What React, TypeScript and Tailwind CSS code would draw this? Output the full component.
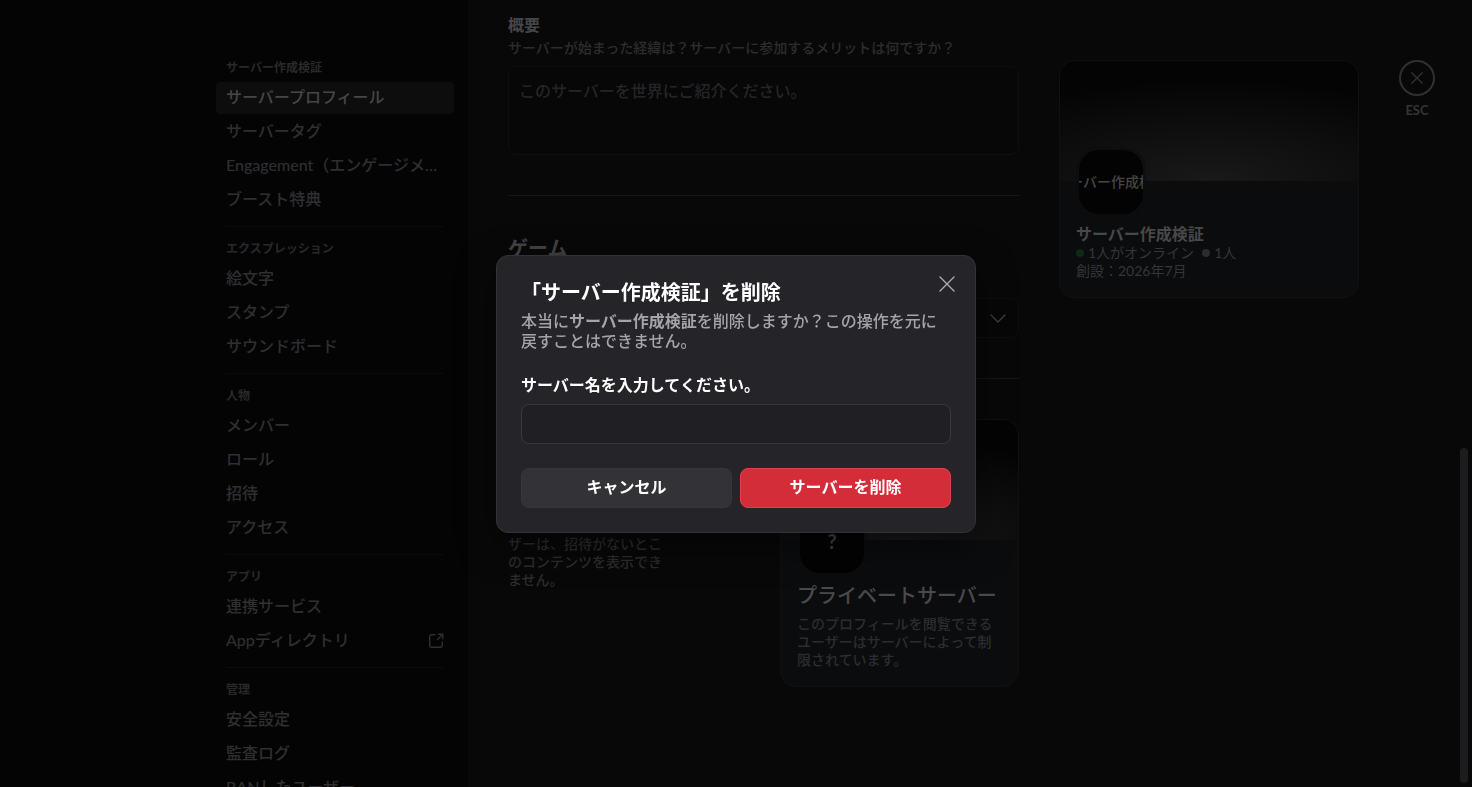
import type { ReactNode } from "react";

type NavItem = { label: string; active?: boolean; external?: boolean };
type NavSection = { title: string; items: NavItem[] };

const sections: NavSection[] = [
  {
    title: "サーバー作成検証",
    items: [
      { label: "サーバープロフィール", active: true },
      { label: "サーバータグ" },
      { label: "Engagement（エンゲージメント）" },
      { label: "ブースト特典" },
    ],
  },
  {
    title: "エクスプレッション",
    items: [{ label: "絵文字" }, { label: "スタンプ" }, { label: "サウンドボード" }],
  },
  {
    title: "人物",
    items: [{ label: "メンバー" }, { label: "ロール" }, { label: "招待" }, { label: "アクセス" }],
  },
  {
    title: "アプリ",
    items: [{ label: "連携サービス" }, { label: "Appディレクトリ", external: true }],
  },
  {
    title: "管理",
    items: [{ label: "安全設定" }, { label: "監査ログ" }, { label: "BANしたユーザー" }],
  },
];

function CloseIcon({ className }: { className: string }) {
  return (
    <svg viewBox="0 0 16 16" fill="none" stroke="currentColor" strokeLinecap="round" className={className} aria-hidden="true">
      <path d="M1 1 L15 15 M15 1 L1 15" />
    </svg>
  );
}

function ExternalIcon() {
  return (
    <svg viewBox="0 0 16 16" fill="none" stroke="currentColor" strokeWidth="1.4" strokeLinecap="round" strokeLinejoin="round" className="h-4 w-4 shrink-0" aria-hidden="true">
      <path d="M7 1.7H3.7a2 2 0 0 0-2 2v8.6a2 2 0 0 0 2 2h8.6a2 2 0 0 0 2-2V9" />
      <path d="M10.3 1.2h4.5v4.5M14.5 1.5L9.4 6.6" />
    </svg>
  );
}

function Sidebar() {
  return (
    <aside className="flex flex-[1_0_238px] justify-end bg-[#040405] pr-[14px] pt-[54px]">
      <nav className="w-[238px]" aria-label="サーバー設定">
        {sections.map((section, index) => (
          <section key={section.title}>
            {index > 0 && <hr className="mx-[10px] mb-2 mt-[10px] border-[#0b0b0c]" />}
            <h2 className="flex h-7 items-center px-[10px] text-xs font-bold text-[#29292b]">{section.title}</h2>
            <ul className="flex flex-col gap-0.5">
              {section.items.map((item) => (
                <li key={item.label}>
                  <a
                    href="#"
                    aria-current={item.active ? "page" : undefined}
                    className={
                      item.active
                        ? "flex h-8 items-start rounded bg-[#0d0d0e] px-[10px] font-medium text-[#464648]"
                        : "flex h-8 items-start rounded px-[10px] font-medium text-[#2f2f31]"
                    }
                  >
                    <span className="min-w-0 flex-1 truncate leading-[30px]">{item.label}</span>
                    {item.external && (
                      <span className="self-center">
                        <ExternalIcon />
                      </span>
                    )}
                  </a>
                </li>
              ))}
            </ul>
          </section>
        ))}
      </nav>
    </aside>
  );
}

function ProfileCard({ icon, className, children }: { icon: ReactNode; className: string; children: ReactNode }) {
  return (
    <article className={className}>
      <div className="flex h-[120px] items-end bg-[radial-gradient(100%_85%_at_50%_100%,#191919_0%,#040404_100%)] px-4">
        <div className="-mb-9 rounded-[22px] bg-[#0a0c0e]/50 p-[3px]">
          <div className="flex h-16 w-16 items-center justify-center overflow-hidden whitespace-nowrap rounded-[20px] bg-[#030303] text-[#464646]">
            {icon}
          </div>
        </div>
      </div>
      {children}
    </article>
  );
}

function ProfileForm() {
  return (
    <form className="w-[511px] pt-[15px]">
      <label htmlFor="about" className="block font-bold leading-5 text-[#464648]">
        概要
      </label>
      <p className="mt-1 text-sm font-medium leading-[18px] text-[#2d2d2f]">
        サーバーが始まった経緯は？サーバーに参加するメリットは何ですか？
      </p>
      <textarea
        id="about"
        placeholder="このサーバーを世界にご紹介ください。"
        className="mt-[9px] block h-[89px] w-full resize-none rounded-lg border border-[#0f0f10] bg-[#070708] px-[10px] py-3 font-medium leading-6 placeholder:text-[#252527]"
      />
      <hr className="my-10 border-[#161617]" />
      <label htmlFor="games" className="block text-xl font-bold leading-6 text-[#434345]">
        ゲーム
      </label>
      <div className="mt-[38px] flex items-center rounded-lg border border-[#0f0f10] bg-[#070708]">
        <select id="games" className="h-[38px] flex-1 appearance-none bg-transparent px-3 text-[#29292b]" />
        <svg viewBox="0 0 16 16" fill="none" stroke="#3e3e40" strokeWidth="1.4" strokeLinecap="round" strokeLinejoin="round" className="mr-3 h-4 w-4" aria-hidden="true">
          <path d="M1 5l7 7 7-7" />
        </svg>
      </div>
      <hr className="my-10 border-[#161617]" />
      <div className="flex justify-between">
        <div className="w-[160px]">
          <h3 className="font-semibold leading-5 text-[#464648]">プライバシー</h3>
          <p className="mt-[60px] text-sm font-medium leading-[18px] text-[#2d2d2f]">
            公開されていません。
            <br />
            参加していないユー
            <br />
            ザーは、招待がないとこのコンテンツを表示できません。
          </p>
        </div>
        <ProfileCard
          icon={<span className="text-xl font-bold leading-6">?</span>}
          className="w-[239px] overflow-hidden rounded-2xl border border-[#101113] bg-[#0a0c0e]"
        >
          <div className="px-4 pb-[17px] pt-[43px]">
            <h3 className="whitespace-nowrap text-xl font-medium leading-6 text-[#4a4a4c]">プライベートサーバー</h3>
            <p className="mt-2 text-sm font-medium leading-[18px] text-[#2d2d2f]">
              このプロフィールを閲覧できるユーザーはサーバーによって制限されています。
            </p>
          </div>
        </ProfileCard>
      </div>
    </form>
  );
}

function ServerPreview() {
  return (
    <div className="mt-[60px] w-[300px]">
      <ProfileCard
        icon={<span className="text-sm font-medium">サーバー作成検証</span>}
        className="overflow-hidden rounded-2xl border border-[#101113] bg-[#0a0c0e]"
      >
        <div className="px-4 pb-[17px] pt-[43px] text-sm leading-[18px] text-[#363638]">
          <h3 className="text-base font-bold leading-5 text-[#484848]">サーバー作成検証</h3>
          <p className="flex items-center gap-2">
            <span className="flex items-center gap-1">
              <span className="h-2 w-2 rounded-full bg-[#0e2917]" />
              1人がオンライン
            </span>
            <span className="flex items-center gap-1">
              <span className="h-2 w-2 rounded-full bg-[#2c2c2e]" />
              1人
            </span>
          </p>
          <p>創設：2026年7月</p>
        </div>
      </ProfileCard>
    </div>
  );
}

function DeleteDialog() {
  return (
    <div className="fixed inset-0 flex items-center justify-center">
      <div
        role="dialog"
        aria-modal="true"
        aria-labelledby="delete-title"
        className="relative w-[480px] rounded-xl border border-[#323237] bg-[#242429] p-6 shadow-[0_12px_36px_rgba(0,0,0,0.5)]"
      >
        <button type="button" aria-label="閉じる" className="absolute right-5 top-5 flex h-4 w-4 items-center justify-center text-[#aaaab1]">
          <CloseIcon className="h-4 w-4 stroke-[1.4]" />
        </button>
        <h1 id="delete-title" className="text-xl font-bold leading-6 text-white">
          「サーバー作成検証」を削除
        </h1>
        <p className="mt-[7px] font-medium leading-5 text-[#a4a4ab]">
          本当に<strong className="font-bold">サーバー作成検証</strong>を削除しますか？この操作を元に戻すことはできません。
        </p>
        <label htmlFor="server-name" className="mt-6 block font-bold leading-5 text-white">
          サーバー名を入力してください。
        </label>
        <input
          id="server-name"
          type="text"
          className="mt-[9px] block h-10 w-full rounded-lg border border-[#37373d] bg-[#202024] px-3 text-white"
        />
        <div className="mt-6 grid grid-cols-2 gap-2">
          <button type="button" className="h-10 rounded-lg border border-[#36363b] bg-[#323237] pb-0.5 font-bold leading-5 text-white">
            キャンセル
          </button>
          <button type="button" className="h-10 rounded-lg border border-[#dc434c] bg-[#d22d39] pb-0.5 font-bold leading-5 text-white">
            サーバーを削除
          </button>
        </div>
      </div>
    </div>
  );
}

export default function App() {
  return (
    <div
      lang="ja"
      className="relative flex h-screen overflow-hidden bg-[#040405] font-['Lato','Noto_Sans_CJK_JP',sans-serif] text-base"
    >
      <Sidebar />
      <main className="flex flex-[1_1_774px] items-start gap-10 bg-[#080809] pl-10">
        <ProfileForm />
        <ServerPreview />
        <button type="button" className="mt-[60px] flex flex-col items-center gap-1 text-[13px] font-bold leading-5 text-[#343436]">
          <span className="flex h-9 w-9 items-center justify-center rounded-full border-2 border-[#303032]">
            <CloseIcon className="h-3 w-3 stroke-[1.6]" />
          </span>
          ESC
        </button>
      </main>
      <div className="absolute bottom-1 right-1 h-[335px] w-2 rounded-full bg-[#1c1c1e]" />
      <DeleteDialog />
    </div>
  );
}
